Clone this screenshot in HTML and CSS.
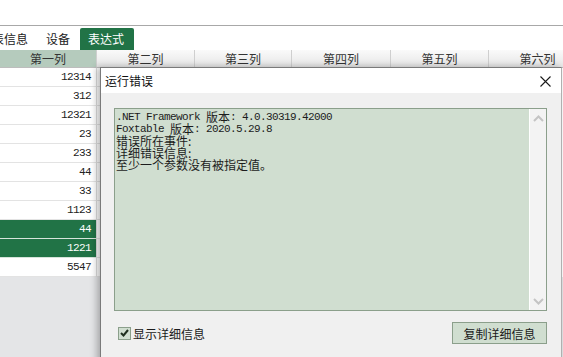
FILE: index.html
```html
<!DOCTYPE html>
<html lang="zh">

<head>
    <meta charset="UTF-8">
    <meta name="viewport" content="width=device-width, initial-scale=1.0">
    <title>运行错误</title>
    <link rel="stylesheet" href="styles.css">
</head>

<body>
    <div class="topbar"></div>

    <div class="tabs">
        <span class="tab tab-cut">表信息</span>
        <span class="tab tab-plain">设备</span>
        <span class="tab tab-active">表达式</span>
    </div>

    <div class="grid">
        <div class="row head">
            <div class="cell sel">第一列</div>
            <div class="cell">第二列</div>
            <div class="cell">第三列</div>
            <div class="cell">第四列</div>
            <div class="cell">第五列</div>
            <div class="cell">第六列</div>
        </div>
        <div class="row"><div class="cell num">12314</div><div class="cell"></div></div>
        <div class="row"><div class="cell num">312</div><div class="cell"></div></div>
        <div class="row"><div class="cell num">12321</div><div class="cell"></div></div>
        <div class="row"><div class="cell num">23</div><div class="cell"></div></div>
        <div class="row"><div class="cell num">233</div><div class="cell"></div></div>
        <div class="row"><div class="cell num">44</div><div class="cell"></div></div>
        <div class="row"><div class="cell num">33</div><div class="cell"></div></div>
        <div class="row"><div class="cell num">1123</div><div class="cell"></div></div>
        <div class="row picked"><div class="cell num">44</div><div class="cell"></div></div>
        <div class="row picked"><div class="cell num">1221</div><div class="cell"></div></div>
        <div class="row"><div class="cell num">5547</div><div class="cell"></div></div>
    </div>

    <!-- error dialog over the grid -->
    <div class="dialog">
        <div class="dialog-title">
            <span>运行错误</span>
            <svg class="close" width="11" height="11" viewBox="0 0 11 11">
                <path d="M0.5 0.5 L10.5 10.5 M10.5 0.5 L0.5 10.5" stroke="#1a1a1a" stroke-width="1.1" fill="none" />
            </svg>
        </div>
        <div class="dialog-body">
            <div class="detail">
                <div class="detail-text">
                    <div class="line">.NET Framework <span class="zh">版本</span>: 4.0.30319.42000</div>
                    <div class="line">Foxtable <span class="zh">版本</span>: 2020.5.29.8</div>
                    <div class="line zh">错误所在事件:</div>
                    <div class="line zh">详细错误信息:</div>
                    <div class="line zh">至少一个参数没有被指定值。</div>
                </div>
                <div class="scroll">
                    <svg width="11" height="7" viewBox="0 0 11 7">
                        <path d="M1 6 L5.5 1.5 L10 6" stroke="#c4c4c4" stroke-width="2" fill="none" />
                    </svg>
                    <svg width="11" height="7" viewBox="0 0 11 7">
                        <path d="M1 1 L5.5 5.5 L10 1" stroke="#c4c4c4" stroke-width="2" fill="none" />
                    </svg>
                </div>
            </div>
            <div class="dialog-foot">
                <label class="check">
                    <span class="box">
                        <svg width="9" height="8" viewBox="0 0 9 8">
                            <path d="M1 4 L3.5 6.5 L8 1" stroke="#1e2e1e" stroke-width="2" fill="none" />
                        </svg>
                    </span>
                    显示详细信息
                </label>
                <button class="copy-btn">复制详细信息</button>
            </div>
        </div>
    </div>
</body>

</html>
```

FILE: styles.css
```css
body {
    margin: 0;
    width: 563px;
    height: 357px;
    overflow: hidden;
    position: relative;
    font-family: "Noto Sans CJK SC", sans-serif;
    font-size: 12px;
    color: #222;
    background: #e4e5e7;
}

.topbar {
    height: 25px;
    background: #fff;
    border-bottom: 1px solid #a8a8a8;
}

.tabs {
    height: 24px;
    background: #fff;
    display: flex;
    align-items: flex-end;
    overflow: hidden;
}

.tab {
    height: 22px;
    line-height: 21px;
    white-space: nowrap;
}

.tab-cut {
    margin-left: -8px;
}

.tab-plain {
    margin-left: 18px;
}

.tab-active {
    margin-left: 10px;
    padding: 0 10px 0 8px;
    background: #217346;
    color: #fff;
    border-radius: 2px 2px 0 0;
}

.grid {
    background: #fff;
    overflow: hidden;
}

.row {
    display: grid;
    grid-template-columns: 97px 98px 97px 99px 98px 98px;
    height: 19px;
}

.cell {
    border-right: 1px solid #dcdcdc;
    border-bottom: 1px solid #e3e3e3;
    overflow: hidden;
    white-space: nowrap;
}

.head {
    height: 18px;
}

.head .cell {
    text-align: center;
    line-height: 17px;
    color: #333;
    background: linear-gradient(#fafafa, #e6e6e6);
    border-right-color: #cfcfcf;
    border-bottom-color: #bdbdbd;
}

.head .sel {
    background: #b5cbbd;
}

.num {
    text-align: right;
    padding-right: 5px;
    font-family: "Liberation Mono", monospace;
    font-size: 11px;
    letter-spacing: -0.6px;
    line-height: 19px;
}

.picked .num {
    background: #217346;
    color: #fff;
    border-bottom-color: #d6e4da;
}

.dialog {
    position: absolute;
    left: 100px;
    top: 67px;
    width: 460px;
    height: 300px;
    background: #f0f0f0;
    border: 1px solid #7a7a7a;
    border-right-color: #b0b0b0;
    box-shadow: -3px 0 7px rgba(0, 0, 0, 0.28);
}

.dialog-title {
    height: 25px;
    background: #fff;
    display: flex;
    align-items: center;
    justify-content: space-between;
    padding: 0 10px 0 4px;
    color: #111;
}

.close {
    margin-top: 1px;
}

.dialog-body {
    padding: 15px 14px 0 13px;
}

.detail {
    height: 201px;
    display: flex;
    background: #d0ded0;
    border: 1px solid #8b9f8b;
}

.detail-text {
    flex: 1;
    padding: 2px 1px;
    font-family: "Liberation Mono", monospace;
    font-size: 11px;
    letter-spacing: -0.6px;
    color: #1c1c1c;
    white-space: nowrap;
}

.line {
    height: 12px;
    line-height: 12px;
    overflow: visible;
}

.zh {
    font-family: "Noto Sans CJK SC", sans-serif;
    font-size: 12px;
    letter-spacing: 0;
    line-height: 12px;
    vertical-align: top;
}

.scroll {
    width: 16px;
    background: #f3f3f3;
    border-left: 1px solid #fff;
    display: flex;
    flex-direction: column;
    justify-content: space-between;
    align-items: center;
    padding: 6px 0 5px;
}

.dialog-foot {
    margin-top: 11px;
    display: flex;
    justify-content: space-between;
    align-items: center;
}

.check {
    display: flex;
    align-items: center;
    gap: 2px;
    margin-left: 4px;
    color: #1a1a1a;
}

.box {
    width: 11px;
    height: 11px;
    border: 1px solid #8b9f8b;
    background: #d0ded0;
    display: flex;
    align-items: center;
    justify-content: center;
}

.copy-btn {
    width: 95px;
    height: 22px;
    padding: 0;
    font-family: "Noto Sans CJK SC", sans-serif;
    font-size: 12px;
    color: #1a1a1a;
    background: #d0ded0;
    border: 1px solid #8b9f8b;
}
```
